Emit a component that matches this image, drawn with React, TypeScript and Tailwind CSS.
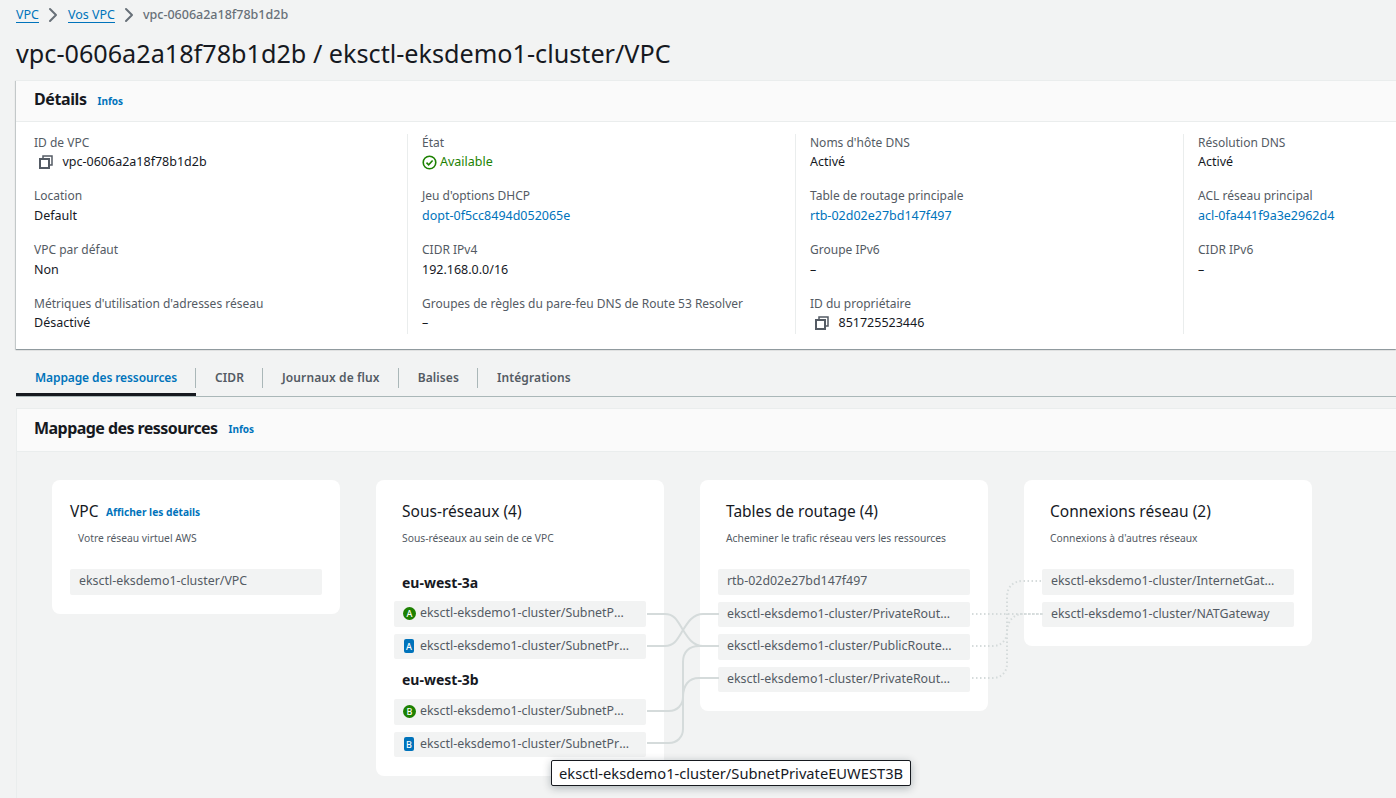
import type { ReactNode } from "react";
import { ChevronRight } from "lucide-react";

const columns = [
  [
    { label: "ID de VPC", value: "vpc-0606a2a18f78b1d2b", copy: true },
    { label: "Location", value: "Default" },
    { label: "VPC par défaut", value: "Non" },
    { label: "Métriques d'utilisation d'adresses réseau", value: "Désactivé" },
  ],
  [
    { label: "État", value: "Available", status: true },
    { label: "Jeu d'options DHCP", value: "dopt-0f5cc8494d052065e", link: true },
    { label: "CIDR IPv4", value: "192.168.0.0/16" },
    { label: "Groupes de règles du pare-feu DNS de Route 53 Resolver", value: "–" },
  ],
  [
    { label: "Noms d'hôte DNS", value: "Activé" },
    { label: "Table de routage principale", value: "rtb-02d02e27bd147f497", link: true },
    { label: "Groupe IPv6", value: "–" },
    { label: "ID du propriétaire", value: "851725523446", copy: true },
  ],
  [
    { label: "Résolution DNS", value: "Activé" },
    { label: "ACL réseau principal", value: "acl-0fa441f9a3e2962d4", link: true },
    { label: "CIDR IPv6", value: "–" },
  ],
];

const tabs = ["Mappage des ressources", "CIDR", "Journaux de flux", "Balises", "Intégrations"];

function CopyIcon() {
  return (
    <svg width="16" height="16" viewBox="0 0 16 16" fill="none" stroke="#545b64" strokeWidth="2" className="ml-[3.5px] shrink-0">
      <rect x="2" y="5" width="9" height="9" />
      <path d="M5 4V2h9v9h-2" strokeWidth="1.5" />
    </svg>
  );
}

function Detail({ item }: { item: { label: string; value: string; copy?: boolean; status?: boolean; link?: boolean } }) {
  return (
    <div className="h-[53.75px]">
      <div className="text-[12px] leading-[18px] text-[#545b64]">{item.label}</div>
      <div className="mt-[1.5px] flex items-center text-[12.5px] leading-[18px] text-[#16191f]">
        {item.copy && <span className="mr-[9px] flex"><CopyIcon /></span>}
        {item.status && (
          <svg width="15" height="15" viewBox="0 0 16 16" fill="none" stroke="#1d8102" strokeWidth="1.7" className="mr-[3px]">
            <circle cx="8" cy="8" r="6.7" />
            <path d="M4.8 8.2l2.3 2.3 4.2-4.6" />
          </svg>
        )}
        <span className={item.link ? "text-[#0073bb]" : item.status ? "text-[#1d8102]" : ""}>{item.value}</span>
      </div>
    </div>
  );
}

function Row({ text, badge, shape }: { text: string; badge?: string; shape?: "circle" | "tag" }) {
  return (
    <div className={`flex h-[25.5px] w-[252px] items-center rounded-[2px] bg-[#f2f3f3] pl-[9px] text-[12.4px] text-[#545b64] ${shape === "circle" ? "pr-[18px]" : "pr-[14px]"}`}>
      {badge && shape === "circle" && (
        <span className="mr-[4px] flex h-[13px] w-[13px] shrink-0 items-center justify-center rounded-full bg-[#1d8102] text-[9px] font-medium text-white">
          {badge}
        </span>
      )}
      {badge && shape === "tag" && (
        <span className="ml-[1px] mr-[6px] flex h-[14px] w-[10px] shrink-0 items-center justify-center rounded-[2px] bg-[#0073bb] text-[9px] font-medium text-white">
          {badge}
        </span>
      )}
      <span className="truncate">{text}</span>
    </div>
  );
}

function Card({ title, subtitle, height, children }: { title: ReactNode; subtitle: string; height: string; children: ReactNode }) {
  return (
    <div className={`w-[288px] rounded-[8px] bg-white ${height} pl-[18px] pr-[18px] pt-[20px]`}>
      <div className="h-[22px] text-[15.5px] leading-[22px] text-[#16191f]">{title}</div>
      <div className="mt-[7px] h-[18px] pl-[8px] text-[10.3px] leading-[18px] text-[#545b64]">{subtitle}</div>
      {children}
    </div>
  );
}

function Connectors() {
  return (
    <svg width="396" height="190" viewBox="646 569 396 190" fill="none" className="absolute left-[630px] top-[117px]">
      <g stroke="#d5dbdb" strokeWidth="2">
        <path d="M646 614H664C674 614 677 622 682 630C687 638 692 646 702 646H718" />
        <path d="M646 646H664C674 646 677 638 682 630C687 622 692 614 702 614H718" />
        <path d="M646 711H668C676 711 682 705 682 697C682 685 688 678 698 678H718" />
        <path d="M646 743H668C676 743 682 737 682 729V662C682 652 688 646 698 646H718" />
      </g>
      <g stroke="#d5dbdb" strokeWidth="2" strokeDasharray="1.5 2.5">
        <path d="M971 614H1042" />
        <path d="M971 646H992C1000 646 1006 640 1006 632C1006 622 1012 614 1022 614H1042" />
        <path d="M971 678H992C1000 678 1006 672 1006 664V597C1006 587 1012 581 1022 581H1042" />
      </g>
    </svg>
  );
}

export default function App() {
  return (
    <div className="h-[798px] w-[1396px] overflow-hidden bg-[#f2f3f3] font-['Noto_Sans',sans-serif]">
      <div className="flex h-[30px] items-center pl-4 text-[12.5px]">
        <a className="border-b border-[#0073bb] leading-[15px] text-[#0073bb]">VPC</a>
        <ChevronRight size={24} strokeWidth={2} color="#687078" className="ml-[2px] mr-[3px]" />
        <a className="border-b border-[#0073bb] leading-[15px] text-[#0073bb]">Vos VPC</a>
        <ChevronRight size={24} strokeWidth={2} color="#687078" className="ml-[2px] mr-[2px]" />
        <span className="font-medium text-[#687078]">vpc-0606a2a18f78b1d2b</span>
      </div>
      <h1 className="h-[50px] pl-4 text-[25.2px] leading-[46px] text-[#16191f]">vpc-0606a2a18f78b1d2b / eksctl-eksdemo1-cluster/VPC</h1>

      <section className="ml-4 h-[269px] overflow-hidden border-t border-[#eaeded] bg-white shadow-[0_1px_1px_0_rgba(0,28,36,0.3),-1px_1px_1px_0_rgba(0,28,36,0.15)]">
        <div className="flex h-[41px] items-center border-b border-[#eaeded] bg-[#fafafa] pb-[4px] pl-[18px]">
          <h2 className="text-[16px] font-bold tracking-[-0.4px] text-[#16191f]">Détails</h2>
          <a className="ml-[11px] mt-[4px] text-[10px] font-bold text-[#0073bb]">Infos</a>
        </div>
        <div className="grid w-[1552px] grid-cols-[388px_388px_388px_388px] pt-[11.7px]">
          {columns.map((col, i) => (
            <div key={i} className={`h-[200px] ${i > 0 ? "ml-[3px] border-l border-[#eaeded] pl-[14px]" : "pl-[18px]"}`}>
              {col.map((item) => (
                <Detail key={item.label} item={item} />
              ))}
            </div>
          ))}
        </div>
      </section>

      <div className="relative ml-4 mt-[18px] flex h-[30px] border-b border-[#aab7b8]">
        {tabs.map((t, i) => (
          <div key={t} className={`flex h-[29px] items-start ${i === 0 ? "border-b-[3px] border-[#16191f]" : ""}`}>
            <span className={`mt-[1px] flex h-[20px] items-center pl-[19px] pr-[18px] text-[12px] font-semibold ${i === 0 ? "tracking-[-0.1px] text-[#0073bb]" : "tracking-[0.1px] text-[#545b64]"} ${i < tabs.length - 1 ? "border-r border-[#aab7b8]" : ""}`}>
              {t}
            </span>
          </div>
        ))}
      </div>

      <section className="ml-4 mt-[11px] h-[391px] border-l border-t border-[#eaeded]">
        <div className="flex h-[43px] items-center border-b border-[#eaeded] bg-[#fafafa] pb-[4px] pl-[17px]">
          <h2 className="text-[16px] font-bold tracking-[-0.55px] text-[#16191f]">Mappage des ressources</h2>
          <a className="ml-[11px] mt-[3px] text-[10px] font-bold text-[#0073bb]">Infos</a>
        </div>
        <div className="relative flex items-start gap-9 pl-[35px] pt-[28px]">
          <Card
            title={
              <div className="flex h-[22px] items-center">
                VPC
                <a className="ml-[7.5px] mt-[2px] text-[10.2px] font-bold text-[#0073bb]">Afficher les détails</a>
              </div>
            }
            subtitle="Votre réseau virtuel AWS"
            height="h-[134px]"
          >
            <div className="mt-[22px]"><Row text="eksctl-eksdemo1-cluster/VPC" /></div>
          </Card>
          <Card title={<div className="pl-[8px]">Sous-réseaux (4)</div>} subtitle="Sous-réseaux au sein de ce VPC" height="h-[296px]">
            <div className="mt-[26px] h-[20px] pl-[8px] text-[14px] font-bold leading-[20px] text-[#16191f]">eu-west-3a</div>
            <div className="mt-[8px] flex flex-col gap-[7px]">
              <Row text="eksctl-eksdemo1-cluster/SubnetPublicEUWEST3A" badge="A" shape="circle" />
              <Row text="eksctl-eksdemo1-cluster/SubnetPrivateEUWEST3A" badge="A" shape="tag" />
            </div>
            <div className="mt-[11px] h-[20px] pl-[8px] text-[14px] font-bold leading-[20px] text-[#16191f]">eu-west-3b</div>
            <div className="mt-[9px] flex flex-col gap-[7px]">
              <Row text="eksctl-eksdemo1-cluster/SubnetPublicEUWEST3B" badge="B" shape="circle" />
              <Row text="eksctl-eksdemo1-cluster/SubnetPrivateEUWEST3B" badge="B" shape="tag" />
            </div>
          </Card>
          <Card title={<div className="pl-[8px]">Tables de routage (4)</div>} subtitle="Acheminer le trafic réseau vers les ressources" height="h-[231px]">
            <div className="mt-[22px] flex flex-col gap-[7px]">
              <Row text="rtb-02d02e27bd147f497" />
              <Row text="eksctl-eksdemo1-cluster/PrivateRouteTableEUWEST3A" />
              <Row text="eksctl-eksdemo1-cluster/PublicRouteTable" />
              <Row text="eksctl-eksdemo1-cluster/PrivateRouteTableEUWEST3B" />
            </div>
          </Card>
          <Card title={<div className="pl-[8px]">Connexions réseau (2)</div>} subtitle="Connexions à d'autres réseaux" height="h-[166px]">
            <div className="mt-[22px] flex flex-col gap-[7px]">
              <Row text="eksctl-eksdemo1-cluster/InternetGateway" />
              <Row text="eksctl-eksdemo1-cluster/NATGateway" />
            </div>
          </Card>
          <Connectors />
          <div className="absolute left-[534px] top-[308px] flex h-[26px] w-[360px] items-center whitespace-nowrap rounded-[2px] border border-[#16191f] bg-white pl-[7px] text-[14.7px] text-[#16191f] shadow-[0_2px_8px_rgba(0,28,36,0.3)]">
            eksctl-eksdemo1-cluster/SubnetPrivateEUWEST3B
          </div>
        </div>
      </section>
    </div>
  );
}
